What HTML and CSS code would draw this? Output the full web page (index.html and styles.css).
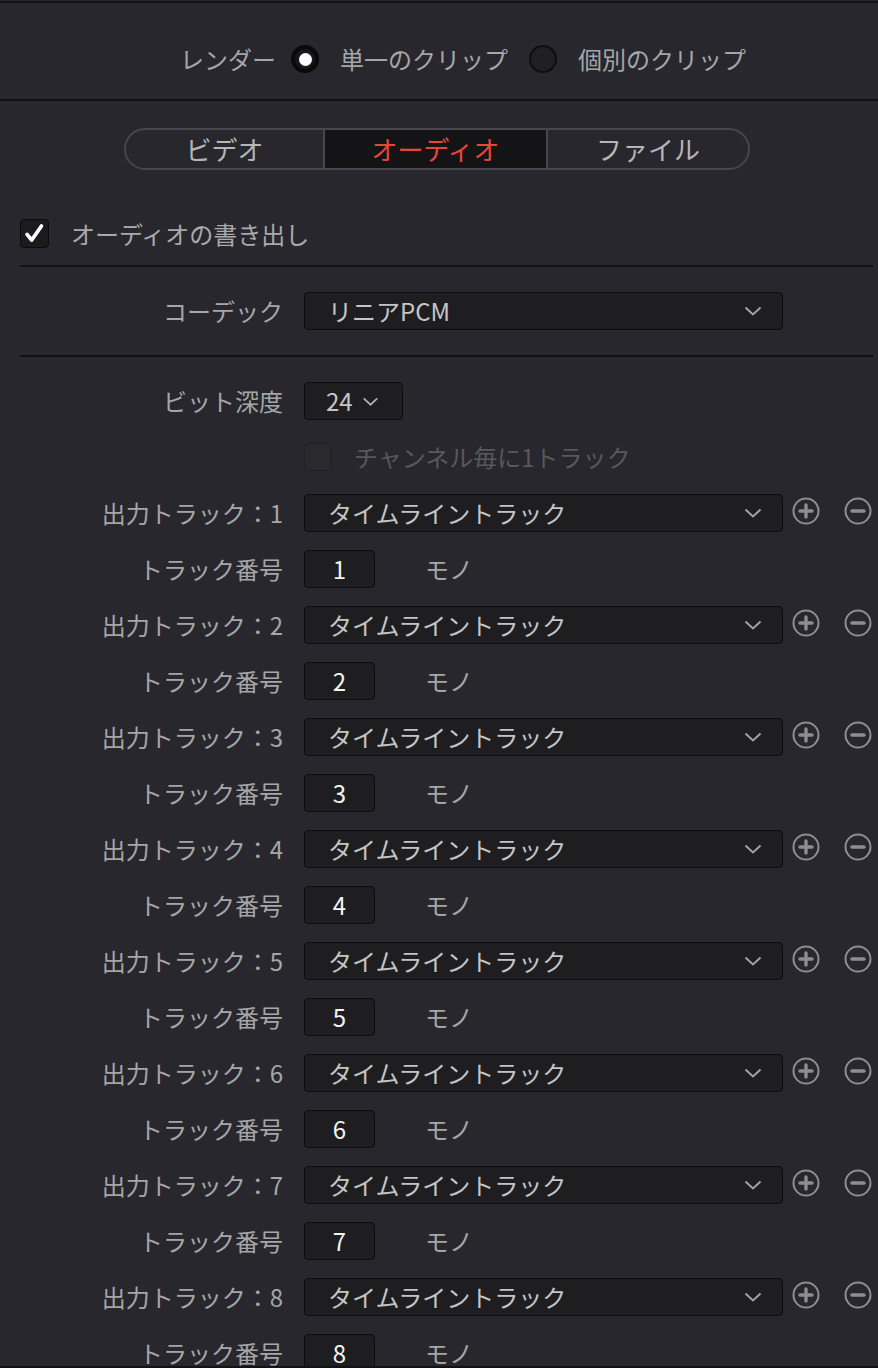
FILE: index.html
```html
<!DOCTYPE html>
<html lang="ja">
<head>
<meta charset="utf-8">
<title>レンダー設定 - オーディオ</title>
<link rel="stylesheet" href="styles.css">
</head>
<body>
<div class="page">
  <div class="top-rule"></div>
  <div class="render-row">
    <span class="render-label">レンダー</span>
    <span class="radio checked"></span>
    <span class="radio-text">単一のクリップ</span>
    <span class="radio"></span>
    <span class="radio-text">個別のクリップ</span>
  </div>
  <div class="rule full"></div>

  <div class="tabs">
    <div class="tab tab-video">ビデオ</div>
    <div class="tab tab-audio active">オーディオ</div>
    <div class="tab tab-file">ファイル</div>
  </div>

  <div class="export-row">
    <span class="checkbox checked">
      <svg viewBox="0 0 29 29" width="27" height="27"><path d="M6.5 15.5 L11.5 21.5 L22 6.5" fill="none" stroke="#fff" stroke-width="4" stroke-linecap="round" stroke-linejoin="round"/></svg>
    </span>
    <span class="export-text">オーディオの書き出し</span>
  </div>
  <div class="rule inset first"></div>

  <div class="form-row codec-row">
    <div class="label">コーデック</div>
    <div class="select wide"><span>リニアPCM</span><svg class="chev" viewBox="0 0 18 10" width="18" height="10"><polyline points="1.5,1.5 9,8.5 16.5,1.5" fill="none" stroke="#a3a3a6" stroke-width="2"/></svg></div>
  </div>
  <div class="rule inset second"></div>

  <div class="form-row bit-row">
    <div class="label">ビット深度</div>
    <div class="select small"><span>24</span><svg class="chev" viewBox="0 0 18 10" width="17" height="9"><polyline points="1.5,1.5 9,8.5 16.5,1.5" fill="none" stroke="#b0b0b3" stroke-width="2"/></svg></div>
  </div>

  <div class="form-row channel-row">
    <div class="label"></div>
    <span class="checkbox disabled"></span>
    <span class="disabled-text">チャンネル毎に1トラック</span>
  </div>

  <div class="tracks">
    <div class="form-row track-row"><div class="label">出力トラック：1</div><div class="select wide"><span>タイムライントラック</span><svg class="chev" viewBox="0 0 18 10" width="18" height="10"><polyline points="1.5,1.5 9,8.5 16.5,1.5" fill="none" stroke="#a3a3a6" stroke-width="2"/></svg></div><svg class="icon-btn plus" viewBox="0 0 28 28" width="28" height="28"><circle cx="14" cy="14" r="12.5" fill="none" stroke="#8e8e92" stroke-width="2"/><path d="M8 14 H20 M14 8 V20" stroke="#8e8e92" stroke-width="3.4" stroke-linecap="round"/></svg><svg class="icon-btn minus" viewBox="0 0 28 28" width="28" height="28"><circle cx="14" cy="14" r="12.5" fill="none" stroke="#8e8e92" stroke-width="2"/><path d="M8 14 H20" stroke="#8e8e92" stroke-width="3.4" stroke-linecap="round"/></svg></div>
    <div class="form-row num-row"><div class="label">トラック番号</div><div class="num">1</div><span class="mono">モノ</span></div>

    <div class="form-row track-row"><div class="label">出力トラック：2</div><div class="select wide"><span>タイムライントラック</span><svg class="chev" viewBox="0 0 18 10" width="18" height="10"><polyline points="1.5,1.5 9,8.5 16.5,1.5" fill="none" stroke="#a3a3a6" stroke-width="2"/></svg></div><svg class="icon-btn plus" viewBox="0 0 28 28" width="28" height="28"><circle cx="14" cy="14" r="12.5" fill="none" stroke="#8e8e92" stroke-width="2"/><path d="M8 14 H20 M14 8 V20" stroke="#8e8e92" stroke-width="3.4" stroke-linecap="round"/></svg><svg class="icon-btn minus" viewBox="0 0 28 28" width="28" height="28"><circle cx="14" cy="14" r="12.5" fill="none" stroke="#8e8e92" stroke-width="2"/><path d="M8 14 H20" stroke="#8e8e92" stroke-width="3.4" stroke-linecap="round"/></svg></div>
    <div class="form-row num-row"><div class="label">トラック番号</div><div class="num">2</div><span class="mono">モノ</span></div>

    <div class="form-row track-row"><div class="label">出力トラック：3</div><div class="select wide"><span>タイムライントラック</span><svg class="chev" viewBox="0 0 18 10" width="18" height="10"><polyline points="1.5,1.5 9,8.5 16.5,1.5" fill="none" stroke="#a3a3a6" stroke-width="2"/></svg></div><svg class="icon-btn plus" viewBox="0 0 28 28" width="28" height="28"><circle cx="14" cy="14" r="12.5" fill="none" stroke="#8e8e92" stroke-width="2"/><path d="M8 14 H20 M14 8 V20" stroke="#8e8e92" stroke-width="3.4" stroke-linecap="round"/></svg><svg class="icon-btn minus" viewBox="0 0 28 28" width="28" height="28"><circle cx="14" cy="14" r="12.5" fill="none" stroke="#8e8e92" stroke-width="2"/><path d="M8 14 H20" stroke="#8e8e92" stroke-width="3.4" stroke-linecap="round"/></svg></div>
    <div class="form-row num-row"><div class="label">トラック番号</div><div class="num">3</div><span class="mono">モノ</span></div>

    <div class="form-row track-row"><div class="label">出力トラック：4</div><div class="select wide"><span>タイムライントラック</span><svg class="chev" viewBox="0 0 18 10" width="18" height="10"><polyline points="1.5,1.5 9,8.5 16.5,1.5" fill="none" stroke="#a3a3a6" stroke-width="2"/></svg></div><svg class="icon-btn plus" viewBox="0 0 28 28" width="28" height="28"><circle cx="14" cy="14" r="12.5" fill="none" stroke="#8e8e92" stroke-width="2"/><path d="M8 14 H20 M14 8 V20" stroke="#8e8e92" stroke-width="3.4" stroke-linecap="round"/></svg><svg class="icon-btn minus" viewBox="0 0 28 28" width="28" height="28"><circle cx="14" cy="14" r="12.5" fill="none" stroke="#8e8e92" stroke-width="2"/><path d="M8 14 H20" stroke="#8e8e92" stroke-width="3.4" stroke-linecap="round"/></svg></div>
    <div class="form-row num-row"><div class="label">トラック番号</div><div class="num">4</div><span class="mono">モノ</span></div>

    <div class="form-row track-row"><div class="label">出力トラック：5</div><div class="select wide"><span>タイムライントラック</span><svg class="chev" viewBox="0 0 18 10" width="18" height="10"><polyline points="1.5,1.5 9,8.5 16.5,1.5" fill="none" stroke="#a3a3a6" stroke-width="2"/></svg></div><svg class="icon-btn plus" viewBox="0 0 28 28" width="28" height="28"><circle cx="14" cy="14" r="12.5" fill="none" stroke="#8e8e92" stroke-width="2"/><path d="M8 14 H20 M14 8 V20" stroke="#8e8e92" stroke-width="3.4" stroke-linecap="round"/></svg><svg class="icon-btn minus" viewBox="0 0 28 28" width="28" height="28"><circle cx="14" cy="14" r="12.5" fill="none" stroke="#8e8e92" stroke-width="2"/><path d="M8 14 H20" stroke="#8e8e92" stroke-width="3.4" stroke-linecap="round"/></svg></div>
    <div class="form-row num-row"><div class="label">トラック番号</div><div class="num">5</div><span class="mono">モノ</span></div>

    <div class="form-row track-row"><div class="label">出力トラック：6</div><div class="select wide"><span>タイムライントラック</span><svg class="chev" viewBox="0 0 18 10" width="18" height="10"><polyline points="1.5,1.5 9,8.5 16.5,1.5" fill="none" stroke="#a3a3a6" stroke-width="2"/></svg></div><svg class="icon-btn plus" viewBox="0 0 28 28" width="28" height="28"><circle cx="14" cy="14" r="12.5" fill="none" stroke="#8e8e92" stroke-width="2"/><path d="M8 14 H20 M14 8 V20" stroke="#8e8e92" stroke-width="3.4" stroke-linecap="round"/></svg><svg class="icon-btn minus" viewBox="0 0 28 28" width="28" height="28"><circle cx="14" cy="14" r="12.5" fill="none" stroke="#8e8e92" stroke-width="2"/><path d="M8 14 H20" stroke="#8e8e92" stroke-width="3.4" stroke-linecap="round"/></svg></div>
    <div class="form-row num-row"><div class="label">トラック番号</div><div class="num">6</div><span class="mono">モノ</span></div>

    <div class="form-row track-row"><div class="label">出力トラック：7</div><div class="select wide"><span>タイムライントラック</span><svg class="chev" viewBox="0 0 18 10" width="18" height="10"><polyline points="1.5,1.5 9,8.5 16.5,1.5" fill="none" stroke="#a3a3a6" stroke-width="2"/></svg></div><svg class="icon-btn plus" viewBox="0 0 28 28" width="28" height="28"><circle cx="14" cy="14" r="12.5" fill="none" stroke="#8e8e92" stroke-width="2"/><path d="M8 14 H20 M14 8 V20" stroke="#8e8e92" stroke-width="3.4" stroke-linecap="round"/></svg><svg class="icon-btn minus" viewBox="0 0 28 28" width="28" height="28"><circle cx="14" cy="14" r="12.5" fill="none" stroke="#8e8e92" stroke-width="2"/><path d="M8 14 H20" stroke="#8e8e92" stroke-width="3.4" stroke-linecap="round"/></svg></div>
    <div class="form-row num-row"><div class="label">トラック番号</div><div class="num">7</div><span class="mono">モノ</span></div>

    <div class="form-row track-row"><div class="label">出力トラック：8</div><div class="select wide"><span>タイムライントラック</span><svg class="chev" viewBox="0 0 18 10" width="18" height="10"><polyline points="1.5,1.5 9,8.5 16.5,1.5" fill="none" stroke="#a3a3a6" stroke-width="2"/></svg></div><svg class="icon-btn plus" viewBox="0 0 28 28" width="28" height="28"><circle cx="14" cy="14" r="12.5" fill="none" stroke="#8e8e92" stroke-width="2"/><path d="M8 14 H20 M14 8 V20" stroke="#8e8e92" stroke-width="3.4" stroke-linecap="round"/></svg><svg class="icon-btn minus" viewBox="0 0 28 28" width="28" height="28"><circle cx="14" cy="14" r="12.5" fill="none" stroke="#8e8e92" stroke-width="2"/><path d="M8 14 H20" stroke="#8e8e92" stroke-width="3.4" stroke-linecap="round"/></svg></div>
    <div class="form-row num-row"><div class="label">トラック番号</div><div class="num">8</div><span class="mono">モノ</span></div>
  </div>
</div>
</body>
</html>
```

FILE: styles.css
```css
html, body {
  margin: 0;
  padding: 0;
  background: #28272d;
}

body {
  font-family: "Noto Sans CJK JP", "Noto Sans", sans-serif;
  font-size: 24px;
  color: #a7a7a9;
}

.page {
  height: 1366px;
  overflow: hidden;
  border-bottom: 2px solid #131315;
}

.top-rule {
  margin-top: 1px;
  height: 2px;
  background: #121214;
}

.render-row {
  display: flex;
  align-items: center;
  height: 28px;
  line-height: 28px;
  padding: 42px 0 26px 180px;
  color: #a6a6a8;
}

.render-label {
  margin-right: 15px;
}

.radio {
  flex: none;
  width: 28px;
  height: 28px;
  box-sizing: border-box;
  border-radius: 50%;
  background: #202023;
  border: 2px solid #0e0e10;
  margin-right: 21px;
  display: flex;
  align-items: center;
  justify-content: center;
}

.radio.checked {
  background: #18181b;
  border: 4px solid #0a0a0b;
}

.radio.checked::after {
  content: "";
  width: 13px;
  height: 13px;
  border-radius: 50%;
  background: #ffffff;
}

.radio-text {
  margin-right: 21px;
}

.rule {
  height: 2px;
  background: #121214;
}

.rule.inset {
  margin: 0 5px 0 20px;
}

.rule.inset.first {
  margin-top: 17px;
}

.rule.inset.second {
  margin-top: 25px;
}

.tabs {
  display: flex;
  width: 626px;
  height: 42px;
  box-sizing: border-box;
  margin: 27px 0 0 124px;
  border: 2px solid #47464d;
  border-radius: 21px;
  overflow: hidden;
}

.tab {
  display: flex;
  align-items: center;
  justify-content: center;
  font-size: 26px;
  line-height: 38px;
  color: #b5b5b7;
}

.tab-video {
  width: 197px;
}

.tab-audio {
  width: 225px;
  box-sizing: border-box;
  border-left: 2px solid #47464d;
  border-right: 2px solid #47464d;
  background: #141416;
  color: #e9463b;
}

.tab-file {
  width: 200px;
}

.export-row {
  display: flex;
  align-items: center;
  height: 29px;
  margin: 49px 0 0 20px;
  color: #aaaaac;
  line-height: 29px;
}

.checkbox {
  flex: none;
  width: 29px;
  height: 29px;
  box-sizing: border-box;
  border-radius: 4px;
  background: #1b1b1e;
  border: 1px solid #0b0b0d;
  margin-right: 22px;
  display: flex;
  align-items: center;
  justify-content: center;
}

.checkbox.disabled {
  width: 28px;
  height: 28px;
  background: #29292e;
  border: 1px solid #202024;
}

.disabled-text {
  color: #58585e;
}

.form-row {
  display: flex;
  align-items: center;
  line-height: 38px;
}

.codec-row {
  margin-top: 25px;
}

.bit-row {
  margin-top: 25px;
}

.channel-row {
  margin-top: 23px;
  height: 28px;
  line-height: 28px;
}

.tracks {
  margin-top: 23px;
  display: flex;
  flex-direction: column;
  gap: 18px;
}

.label {
  flex: none;
  width: 283px;
  margin-right: 21px;
  text-align: right;
  color: #a6a6a8;
  white-space: nowrap;
}

.select {
  height: 38px;
  box-sizing: border-box;
  background: #1e1e21;
  border: 1px solid #0c0c0e;
  border-radius: 4px;
  display: flex;
  align-items: center;
  color: #c5c5c7;
}

.select.wide {
  width: 479px;
  padding: 0 20px 0 23px;
  justify-content: space-between;
}

.select.small {
  width: 99px;
  padding-left: 21px;
  gap: 9px;
}

.chev {
  flex: none;
}

.num {
  width: 71px;
  height: 38px;
  box-sizing: border-box;
  background: #1e1e21;
  border: 1px solid #0c0c0e;
  border-radius: 4px;
  display: flex;
  align-items: center;
  justify-content: center;
  color: #f3f3f3;
}

.mono {
  margin-left: 50px;
  color: #a6a6a8;
}

.icon-btn {
  flex: none;
  position: relative;
  top: -2px;
}

.icon-btn.plus {
  margin-left: 9px;
}

.icon-btn.minus {
  margin-left: 24px;
}
```
